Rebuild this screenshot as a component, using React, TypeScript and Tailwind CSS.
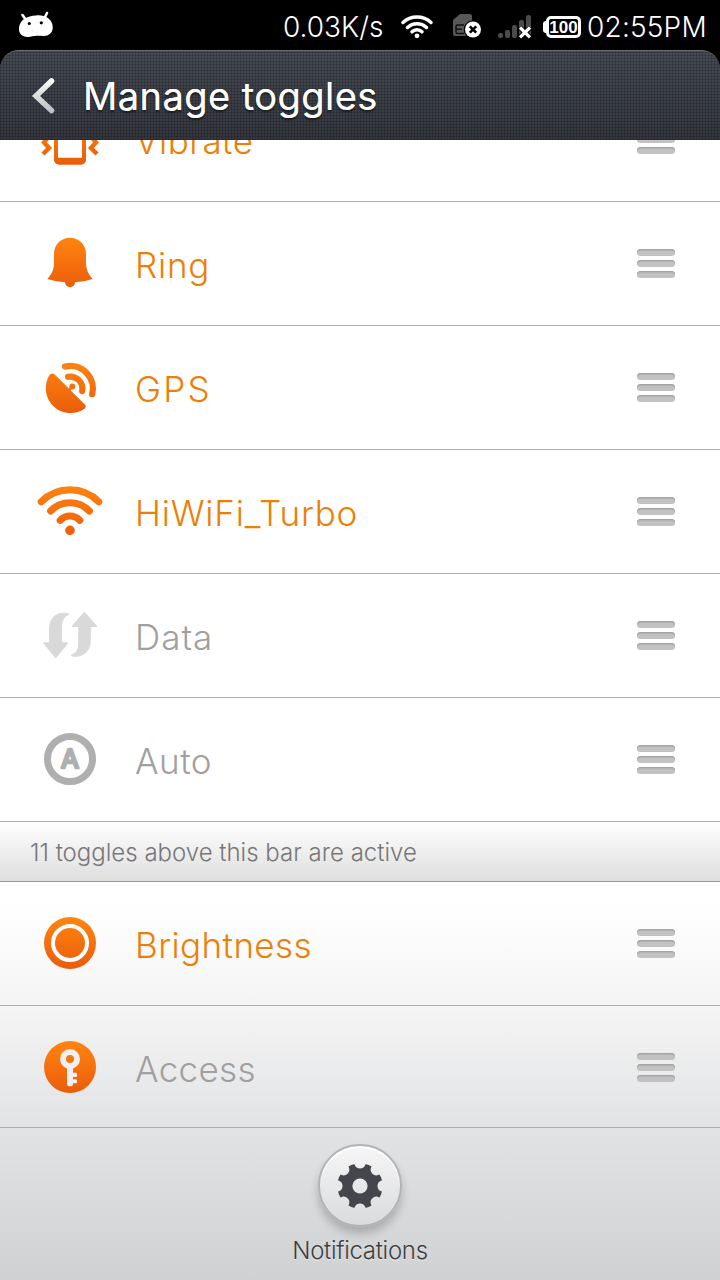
import type { ReactNode } from "react";

const ORANGE = "url(#orange)";

function Bell() {
  return (
    <path
      fill={ORANGE}
      d="M32 5.7C23 5.7 16 12.5 16 22V31C16 38 13 43 9.3 47Q18 49.8 27 50.3A5 5 0 0 0 37 50.3Q46 49.8 54.7 47C51 43 48 38 48 31V22C48 12.5 41 5.7 32 5.7Z"
    />
  );
}

function Vibrate() {
  return (
    <g stroke={ORANGE} fill="none">
      <path
        stroke="none"
        fill={ORANGE}
        fillRule="evenodd"
        d="M21 6H43A5 5 0 0 1 48 11V51.7A5 5 0 0 1 43 56.7H21A5 5 0 0 1 16 51.7V11A5 5 0 0 1 21 6ZM20 13V49.7H44V13Z"
      />
      <path strokeWidth="4.4" d="M5 46L11 40L6 34.5L11 28L5 22M59 46L53 40L58 34.5L53 28L59 22" />
    </g>
  );
}

function Gps() {
  return (
    <g>
      <path
        fill={ORANGE}
        d="M17 18.7L46.8 48.6Q48.8 50.9 46.5 52.7A24.8 24.8 0 0 1 11.8 18.6Q14.3 16.2 17 18.7Z"
      />
      <circle cx="34.3" cy="30.5" r="3" fill={ORANGE} />
      <path stroke={ORANGE} strokeWidth="2.4" d="M34 31L30.5 34.5" />
      <g fill="none" stroke={ORANGE} strokeWidth="6.2" strokeLinecap="round">
        <path d="M30 20.8A12.2 12.2 0 0 1 44.2 35" />
        <path d="M27 10.6A22.6 22.6 0 0 1 54.2 38.2" />
      </g>
    </g>
  );
}

function Wifi() {
  return (
    <g>
      <g fill="none" stroke={ORANGE} strokeWidth="7" strokeLinecap="round">
        <path d="M3.2 21.7A40.8 40.8 0 0 1 60.8 21.7" />
        <path d="M12.6 31A26.9 26.9 0 0 1 51.4 31" />
        <path d="M22.2 40.3A13.2 13.2 0 0 1 41.8 40.3" />
      </g>
      <circle cx="32" cy="50.3" r="4.8" fill={ORANGE} />
    </g>
  );
}

function DataArrows() {
  return (
    <g fill="#d9d9d9" stroke="#d9d9d9" strokeWidth="1.6" strokeLinejoin="round">
      <path d="M17.7 53.3L6 39H11.8V25C11.8 15 18 9.6 25 9.6Q28 9.4 30.3 10C26 12 23.2 17 23.2 22V39H29.3Z" />
      <path d="M46.3 8.8L58.3 22.3H52V36C52 46 46 51.6 39 51.9Q36 52 33.8 51.4C38.5 49.6 41 45 41 40V22.3H34.6Z" />
    </g>
  );
}

function Auto() {
  return (
    <g>
      <circle cx="32" cy="31" r="22.5" fill="none" stroke="#afafaf" strokeWidth="7" />
      <text
        x="32"
        y="40"
        textAnchor="middle"
        className="font-['Inter',sans-serif] text-[26px] font-normal"
        fill="#afafaf"
        stroke="#afafaf"
        strokeWidth="2.6"
        strokeLinejoin="round"
      >
        A
      </text>
    </g>
  );
}

function Brightness() {
  return (
    <g>
      <circle cx="32" cy="31" r="26" fill={ORANGE} />
      <circle cx="32" cy="31" r="17" fill="none" stroke="#fff" strokeWidth="4" />
    </g>
  );
}

function Access() {
  return (
    <g>
      <circle cx="32" cy="31" r="26" fill={ORANGE} />
      <circle cx="32" cy="23" r="7" fill="none" stroke="#f0f0f1" strokeWidth="6" />
      <path
        fill="#f0f0f1"
        d="M29 31H35V36.7H38A1 1 0 0 1 39 37.7V40A1 1 0 0 1 38 41H35V43.3H38A1 1 0 0 1 39 44.3V46.3A1 1 0 0 1 38 47.3H35V48A3 2.3 0 0 1 29 48Z"
      />
    </g>
  );
}

function Grip() {
  const bar = "h-[7px] w-[38px] rounded-full bg-[#c2c2c2] shadow-[inset_0_1.5px_1px_#a3a3a3]";
  return (
    <div className="flex flex-col gap-1">
      <div className={bar} />
      <div className={bar} />
      <div className={bar} />
    </div>
  );
}

function Row({ icon, label, tone, spacing }: { icon: ReactNode; label: string; tone: string; spacing: string }) {
  return (
    <div className="flex h-[124px] w-full shrink-0 items-center border-b border-[#b0b0b0] pr-[45px] pl-[38px]">
      <svg className="h-[63px] w-16 overflow-visible" viewBox="0 0 64 63">
        {icon}
      </svg>
      <span className={`ml-[33px] flex-1 pt-[3px] text-[35px] leading-[42px] font-light ${spacing} ${tone}`}>{label}</span>
      <Grip />
    </div>
  );
}

const ON = "text-[#ec7f05]";
const OFF = "text-[#a0a0a0]";

function StatusBar() {
  return (
    <div className="flex h-[50px] items-center bg-black pt-[2px] text-white">
      <svg className="mb-[2px] ml-[18px] h-7 w-9" viewBox="0 0 36 28">
        <path stroke="#fff" strokeWidth="2.6" strokeLinecap="round" d="M4.5 4L8 9M29 2L26.5 7" />
        <path
          fill="#fff"
          d="M18 4.5C26 3.5 33 7 34.5 14C36 21 31 25.5 25 25C20 24.5 17 24.8 12 25.8C5 27 .5 23 1 17C1.5 9 9 4.8 18 4.5Z"
        />
        <circle cx="11.3" cy="12.5" r="1.6" />
        <circle cx="23.3" cy="11.8" r="1.6" />
        <path stroke="#e4e4e4" strokeWidth=".8" d="M15 18.5V21M18.5 20V22" />
      </svg>
      <span className="ml-[229px] w-[101px] pt-px text-[28px] leading-[34px] font-light tracking-[0px] whitespace-nowrap">0.03K/s</span>
      <svg className="ml-[16px] h-[26px] w-[34px]" viewBox="0 0 34 26">
        <g fill="none" stroke="#fff" strokeWidth="3.5" strokeLinecap="round">
          <path d="M3 9.5A20.5 20.5 0 0 1 31 9.5" />
          <path d="M7.5 14.5A13.7 13.7 0 0 1 26.5 14.5" />
          <path d="M12 18.8A7 7 0 0 1 22 18.8" />
        </g>
        <circle cx="17" cy="22.8" r="2.4" fill="#fff" />
      </svg>
      <svg className="ml-[18px] h-[26px] w-[30px]" viewBox="0 0 30 26">
        <path fill="#585858" d="M8 1H18Q20 1 20 3V23H3Q1 23 1 21V7Z" />
        <path stroke="#111" strokeWidth="1.5" fill="none" d="M12 12H5.5Q4 12 4 13.5V19Q4 20.5 5.5 20.5H12M4 16.3H10" />
        <circle cx="21" cy="16.5" r="9.3" fill="#000" />
        <circle cx="21" cy="16.5" r="8" fill="#fff" />
        <path stroke="#000" strokeWidth="2.6" d="M17.8 13.3L24.2 19.7M24.2 13.3L17.8 19.7" />
      </svg>
      <svg className="ml-[16px] h-[26px] w-[34px]" viewBox="0 0 34 26">
        <g fill="#4b4b4b">
          <rect x="0" y="20" width="5" height="5" rx="2" />
          <rect x="7" y="17" width="5" height="8" rx="2" />
          <rect x="14" y="12" width="5" height="13" rx="2" />
          <rect x="21" y="7" width="5" height="18" rx="2" />
          <rect x="28" y="2" width="5" height="23" rx="2" />
        </g>
        <path stroke="#000" strokeWidth="5" d="M21.5 14.5L32.5 24.5M32.5 14.5L21.5 24.5" />
        <path stroke="#fff" strokeWidth="3.2" d="M22 14.5L32 24.3M32 14.5L22 24.3" />
      </svg>
      <div className="ml-[11px] flex items-center pt-px">
        <div className="h-[12px] w-[3px] rounded-l-sm bg-white" />
        <div className="flex h-[22px] w-[35px] items-center justify-center rounded-[5px] border-[3px] border-white pt-px font-['Liberation_Sans',sans-serif] text-[17px] leading-none font-bold tracking-[0px]">
          100
        </div>
      </div>
      <span className="ml-[6px] pt-px text-[28px] leading-[34px] font-light tracking-[0.2px] whitespace-nowrap">02:55PM</span>
    </div>
  );
}

function Header() {
  return (
    <div className="h-[90px] bg-black">
      <div className="flex h-full items-center rounded-t-[19px] border-t border-[#6c6f75] bg-[repeating-linear-gradient(90deg,rgba(0,0,0,0.16)_0_1px,transparent_1px_3px),repeating-linear-gradient(0deg,rgba(0,0,0,0.16)_0_1px,transparent_1px_3px),linear-gradient(#464a53,#33363d)]">
        <svg className="ml-[31px] h-9 w-6 overflow-visible" viewBox="0 0 24 36">
          <defs>
            <linearGradient id="chev" x1="0" y1="0" x2="0" y2="36" gradientUnits="userSpaceOnUse">
              <stop offset="0" stopColor="#fff" />
              <stop offset="1" stopColor="#b9babd" />
            </linearGradient>
          </defs>
          <path d="M20.5 3L5 18L20.5 32.5" fill="none" stroke="url(#chev)" strokeWidth="5.6" strokeLinecap="round" />
        </svg>
        <span className="ml-[28px] pt-px text-[38px] leading-[46px] font-normal tracking-[0.45px] text-white [text-shadow:0_2px_2px_rgba(0,0,0,0.5),0_0_0.5px_#fff]">
          Manage toggles
        </span>
      </div>
    </div>
  );
}

const VALLEYS = [0, 45, 90, 135, 180, 225, 270, 315];

function Footer() {
  return (
    <div className="flex h-[153px] flex-col items-center border-t border-[#acadaf] bg-linear-to-b from-[#e2e3e5] to-[#d0d1d3] pt-4">
      <div className="flex h-[83px] w-[84px] shrink-0 items-center justify-center rounded-full border-2 border-[#b1b3b7] bg-linear-to-b from-[#f6f6f7] to-[#dadbdd] shadow-[inset_0_2px_1px_#fff,0_7px_8px_rgba(0,0,0,0.2)]">
        <svg className="size-[46px]" viewBox="-23 -23 46 46">
          <mask id="gear">
            <circle r="22.7" fill="#fff" />
            {VALLEYS.map((a) => (
              <path key={a} transform={`rotate(${a})`} d="M-7 -25L-5 -20.5C-3.5 -16.5 3.5 -16.5 5 -20.5L7 -25Z" fill="#000" />
            ))}
            <circle r="7.6" fill="#000" />
          </mask>
          <rect x="-23" y="-23" width="46" height="46" fill="#45464b" mask="url(#gear)" />
        </svg>
      </div>
      <span className="mt-[9px] text-[24px] leading-[29px] font-light tracking-[-0.3px] text-[#3c3d40] [text-shadow:0_1px_0_rgba(255,255,255,0.6)]">
        Notifications
      </span>
    </div>
  );
}

export default function App() {
  return (
    <div className="flex h-[1280px] w-[720px] flex-col overflow-hidden bg-white font-['Inter',sans-serif]">
      <svg className="absolute size-0">
        <defs>
          <linearGradient id="orange" x1="0" y1="6" x2="0" y2="57" gradientUnits="userSpaceOnUse">
            <stop offset="0" stopColor="#ff8410" />
            <stop offset="1" stopColor="#ea5c0b" />
          </linearGradient>
        </defs>
      </svg>
      <StatusBar />
      <Header />
      <div className="flex h-[62px] shrink-0 items-end overflow-hidden">
        <Row icon={<Vibrate />} label="Vibrate" tone={ON} spacing="tracking-[0.5px]" />
      </div>
      <Row icon={<Bell />} label="Ring" tone={ON} spacing="tracking-[0.8px]" />
      <Row icon={<Gps />} label="GPS" tone={ON} spacing="tracking-[2.2px]" />
      <Row icon={<Wifi />} label="HiWiFi_Turbo" tone={ON} spacing="tracking-[0.8px]" />
      <Row icon={<DataArrows />} label="Data" tone={OFF} spacing="tracking-[1px]" />
      <Row icon={<Auto />} label="Auto" tone={OFF} spacing="tracking-[0.5px]" />
      <div className="flex h-[60px] shrink-0 items-center border-b border-[#999] bg-linear-to-b from-white to-[#dedede] pt-[3px] pl-[30px] text-[24px] font-light text-[#777]">
        11 toggles above this bar are active
      </div>
      <div className="flex h-[245px] shrink-0 flex-col overflow-hidden bg-[linear-gradient(#fff_0%,#fefefe_15%,#f4f4f4_52%,#e2e3e5_100%)]">
        <Row icon={<Brightness />} label="Brightness" tone={ON} spacing="tracking-[0.4px]" />
        <Row icon={<Access />} label="Access" tone={OFF} spacing="tracking-[0.3px]" />
      </div>
      <Footer />
    </div>
  );
}
